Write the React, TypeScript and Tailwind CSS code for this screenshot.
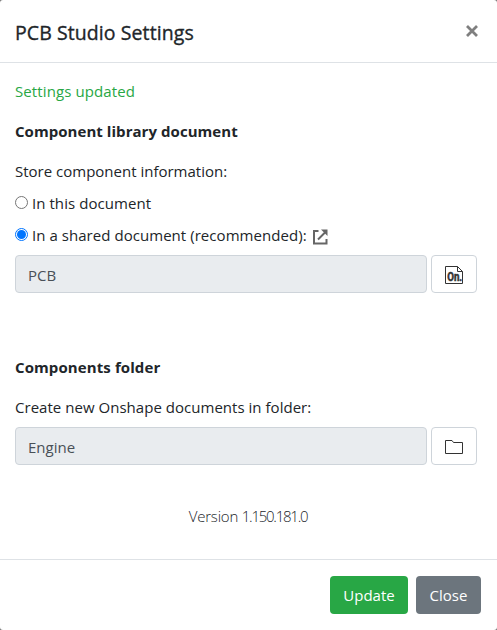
import type { ReactNode } from "react";

function Field({ value, label, icon }: { value: string; label: string; icon: ReactNode }) {
  return (
    <div className="flex gap-1 pr-1">
      <input
        readOnly
        value={value}
        aria-label={label}
        className="h-[38px] w-[412px] rounded border border-[#ced4da] bg-[#e9ecef] px-3 pt-0.5 text-[15px] text-[#495057] outline-none"
      />
      <button aria-label={label} className="flex h-[38px] w-[46px] items-center justify-center rounded border border-[#ced4da] bg-white">
        {icon}
      </button>
    </div>
  );
}

function Radio({ checked }: { checked?: boolean }) {
  return (
    <span
      className={
        checked
          ? "-mt-0.5 mr-1 flex size-[13px] items-center justify-center rounded-full border border-[#0075ff]"
          : "-mt-0.5 mr-1 flex size-[13px] items-center justify-center rounded-full border border-[#767676]"
      }
    >
      {checked && <span className="size-[9px] rounded-full bg-[#0075ff]" />}
    </span>
  );
}

function DocumentIcon() {
  return (
    <svg width="18" height="18" viewBox="0 0 18 18" fill="none" stroke="#333" className="mt-[2px] overflow-visible">
      <path d="M.5.5h12l5 5v12H.5zM12.5.5v5h5" />
      <text x="2.2" y="15.2" fill="#333" strokeWidth=".5" fontSize="12" fontWeight="700" fontFamily="Roboto, sans-serif" textLength="15" lengthAdjust="spacingAndGlyphs">On.</text>
    </svg>
  );
}

function FolderIcon() {
  return (
    <svg width="18" height="14" viewBox="0 0 18 14" fill="none" stroke="#333" className="mt-[2px]">
      <path d="M.5.5h6.500l1.500 2h9v11H.5z" />
    </svg>
  );
}

export default function App() {
  return (
    <div className="h-[630px] w-[497px] bg-[#777]">
      <div className="flex h-full flex-col overflow-hidden rounded-[3px] bg-white font-['Open_Sans','Noto_Sans',sans-serif] text-[15px] leading-6 text-[#212529]">
        <header className="flex h-[63px] shrink-0 items-center justify-between border-b border-[#dee2e6] pr-[19px] pl-[15px]">
          <h1 className="mt-[3px] text-[19.5px] leading-[30px] font-medium tracking-[0.08px] [-webkit-text-stroke:0.35px]">PCB Studio Settings</h1>
          <button aria-label="Close" className="flex size-3 items-center justify-center">
            <svg width="12" height="12" viewBox="0 0 12 12" stroke="#7f7f7f" strokeWidth="2.8">
              <path d="M1 1l10 10M11 1L1 11" />
            </svg>
          </button>
        </header>
        <main className="flex h-[496px] shrink-0 flex-col px-[15px] pt-4">
          <p className="mb-4 tracking-[0.1px] text-[#28a745]">Settings updated</p>
          <h2 className="mb-4 font-bold tracking-[0.05px]">Component library document</h2>
          <p className="mb-2">Store component information:</p>
          <label className="mb-2 flex items-center"><Radio /><span className="tracking-[0.06px]">In this document</span></label>
          <label className="mb-2 flex items-center">
            <Radio checked />
            <span className="tracking-[0.05px]">In a shared document (recommended):</span>
            <svg width="16" height="16" viewBox="0 0 16 16" fill="none" stroke="#666" strokeWidth="2" className="mt-[3px] ml-[5px]">
              <path d="M6.500 2H2v12.500h12.500V10M6 10.500l7-7" />
              <path d="M9 .5h6.500V7z" fill="#666" stroke="none" />
            </svg>
          </label>
          <Field value="PCB" label="Component library" icon={<DocumentIcon />} />
          <h2 className="mt-[62px] mb-4 font-bold tracking-[0.1px]">Components folder</h2>
          <p className="mb-2 tracking-[0.03px]">Create new Onshape documents in folder:</p>
          <Field value="Engine" label="Components folder" icon={<FolderIcon />} />
          <p className="mt-[39px] pr-px text-center font-light tracking-[-0.2px]">Version <span className="tracking-[-1.25px]">1.150.181.0</span></p>
        </main>
        <footer className="flex h-[71px] shrink-0 justify-end gap-2 border-t border-[#dee2e6] pt-4 pr-4">
          <button className="h-[38px] w-[78px] rounded bg-[#28a745] text-white">Update</button>
          <button className="h-[38px] w-[65px] rounded bg-[#6c757d] text-white">Close</button>
        </footer>
      </div>
    </div>
  );
}
